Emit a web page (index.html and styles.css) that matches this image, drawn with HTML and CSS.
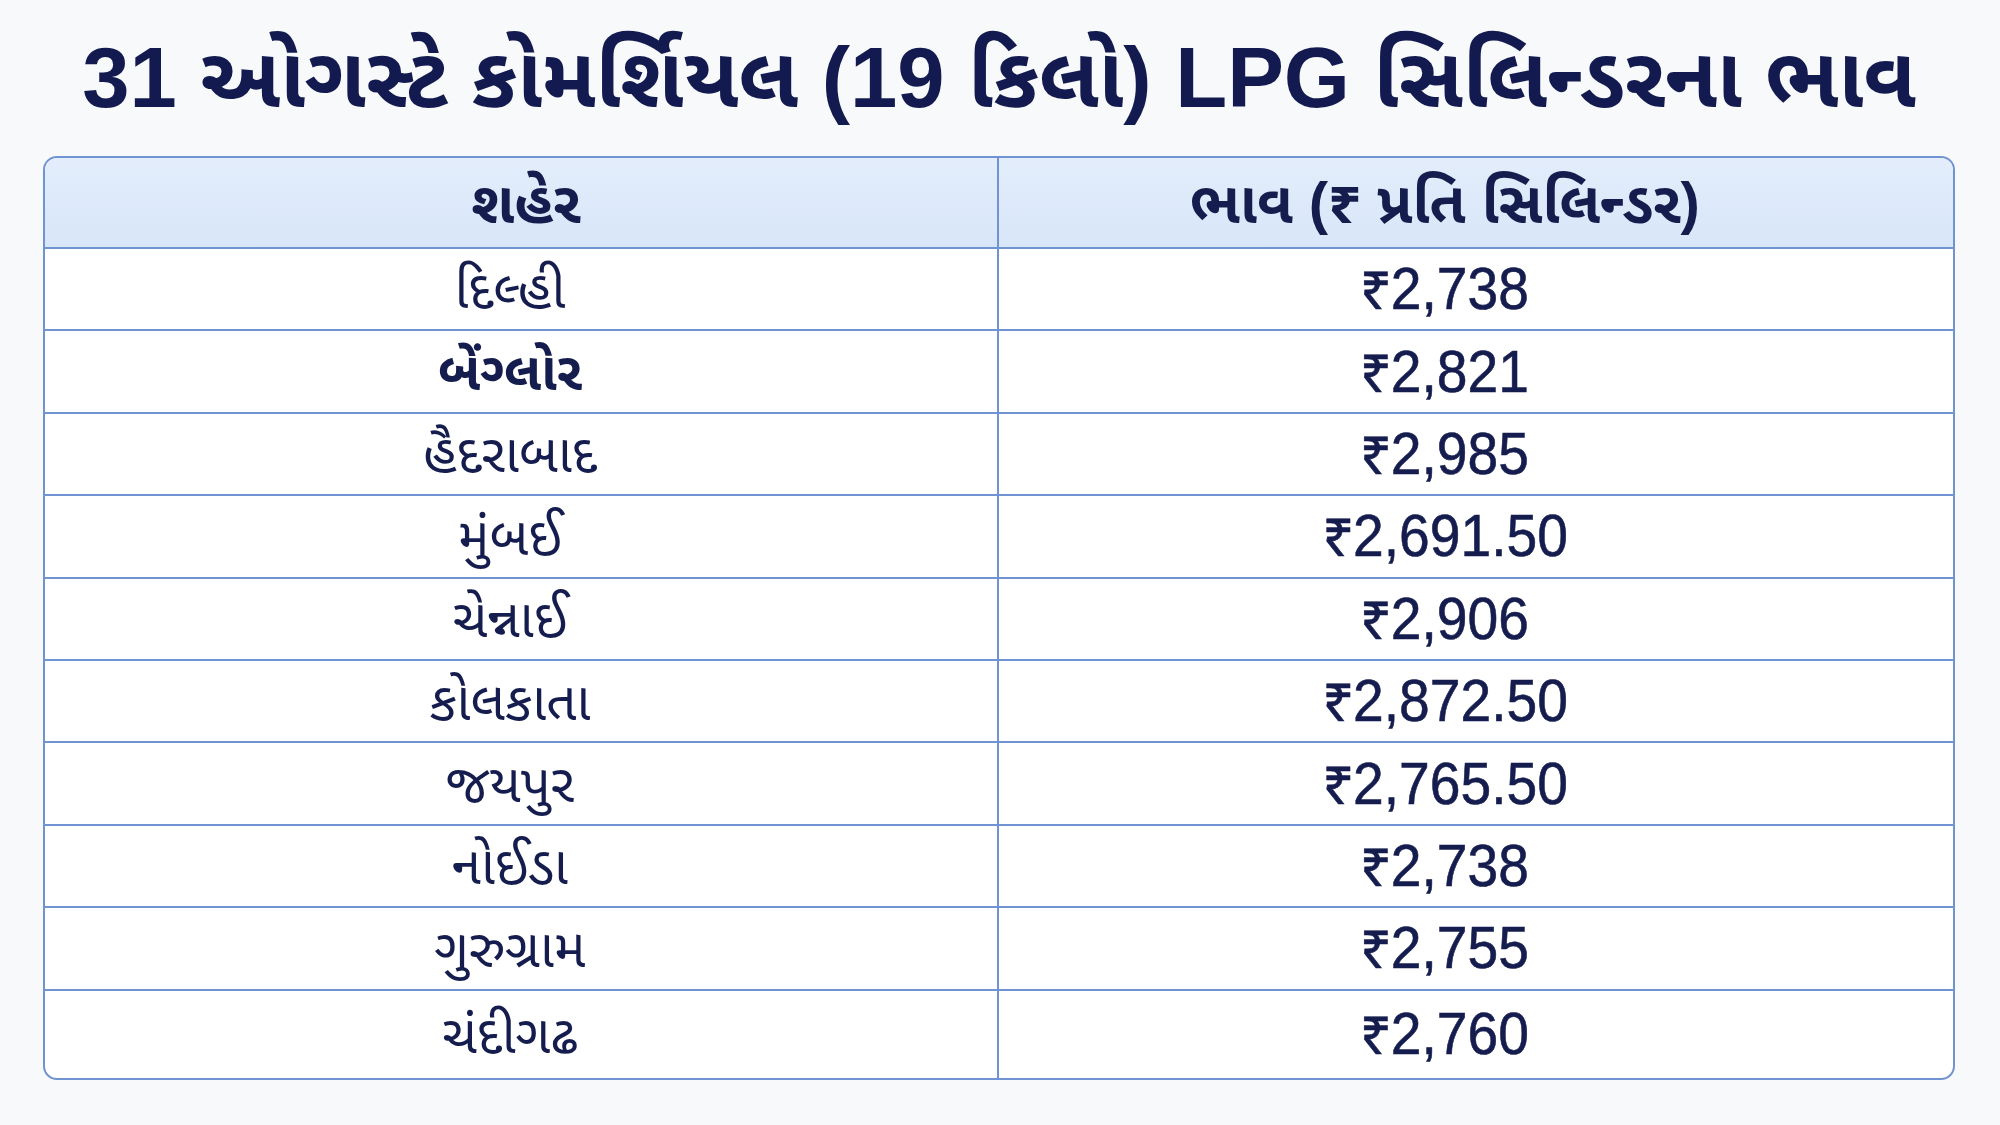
FILE: index.html
```html
<!DOCTYPE html>
<html lang="gu">
<head>
<meta charset="utf-8">
<title>LPG ભાવ</title>
<link rel="stylesheet" href="styles.css">
</head>
<body>
<main class="page">
  <h1 class="title">31 ઓગસ્ટે કોમર્શિયલ (19 કિલો) LPG સિલિન્ડરના ભાવ</h1>
  <div class="table">
    <div class="row head">
      <div class="cell city">શહેર</div>
      <div class="cell price">ભાવ (₹ પ્રતિ સિલિન્ડર)</div>
    </div>
    <div class="row"><div class="cell city">દિલ્હી</div><div class="cell price"><span class="num">₹2,738</span></div></div>
    <div class="row"><div class="cell city strong">બેંગ્લોર</div><div class="cell price"><span class="num">₹2,821</span></div></div>
    <div class="row"><div class="cell city">હૈદરાબાદ</div><div class="cell price"><span class="num">₹2,985</span></div></div>
    <div class="row"><div class="cell city">મુંબઈ</div><div class="cell price"><span class="num">₹2,691.50</span></div></div>
    <div class="row"><div class="cell city">ચેન્નાઈ</div><div class="cell price"><span class="num">₹2,906</span></div></div>
    <div class="row"><div class="cell city">કોલકાતા</div><div class="cell price"><span class="num">₹2,872.50</span></div></div>
    <div class="row"><div class="cell city">જયપુર</div><div class="cell price"><span class="num">₹2,765.50</span></div></div>
    <div class="row"><div class="cell city">નોઈડા</div><div class="cell price"><span class="num">₹2,738</span></div></div>
    <div class="row"><div class="cell city">ગુરુગ્રામ</div><div class="cell price"><span class="num">₹2,755</span></div></div>
    <div class="row last"><div class="cell city">ચંદીગઢ</div><div class="cell price"><span class="num">₹2,760</span></div></div>
  </div>
</main>
</body>
</html>
```
FILE: styles.css
```css
html, body {
  margin: 0;
  padding: 0;
  background: #f8f9fb;
}
body {
  width: 2000px;
  height: 1125px;
  overflow: hidden;
  font-family: "Liberation Sans", "Noto Sans Gujarati", "Lohit Gujarati", "Noto Sans", sans-serif;
  color: #141c4e;
}
.page {
  padding: 0 45px 0 43px;
  display: flex;
  flex-direction: column;
}
.title {
  margin: 0;
  height: 156px;
  display: flex;
  align-items: center;
  justify-content: center;
  font-size: 85px;
  font-weight: 700;
  color: #121a50;
  padding-top: 14px;
  box-sizing: border-box;
  white-space: nowrap;
}
.table {
  border: 2px solid #7093d2;
  border-radius: 14px;
  overflow: hidden;
  background: #ffffff;
  display: flex;
  flex-direction: column;
}
.row {
  display: grid;
  grid-template-columns: 1fr 1fr;
  height: 82.4px;
  border-top: 2px solid #7093d2;
  box-sizing: border-box;
}
.row.last {
  height: 89px;
}
.row.head {
  height: 89px;
  border-top: none;
  background: linear-gradient(#e3edfb, #d8e6f9);
}
.cell {
  display: flex;
  align-items: center;
  justify-content: center;
  font-size: 53px;
  line-height: 1;
  color: #151d4f;
}
.cell.city {
  padding-right: 22px;
  border-right: 2px solid #7093d2;
}
.cell.price {
  padding-right: 62px;
}
.num {
  display: inline-block;
  font-size: 60px;
  transform: scaleX(0.92);
  -webkit-text-stroke: 0.6px #151d4f;
}
.head .cell {
  font-weight: 700;
  font-size: 58px;
}
.head .cell.city {
  padding-right: 0;
  padding-left: 10px;
}
.city.strong {
  font-weight: 700;
}
```
